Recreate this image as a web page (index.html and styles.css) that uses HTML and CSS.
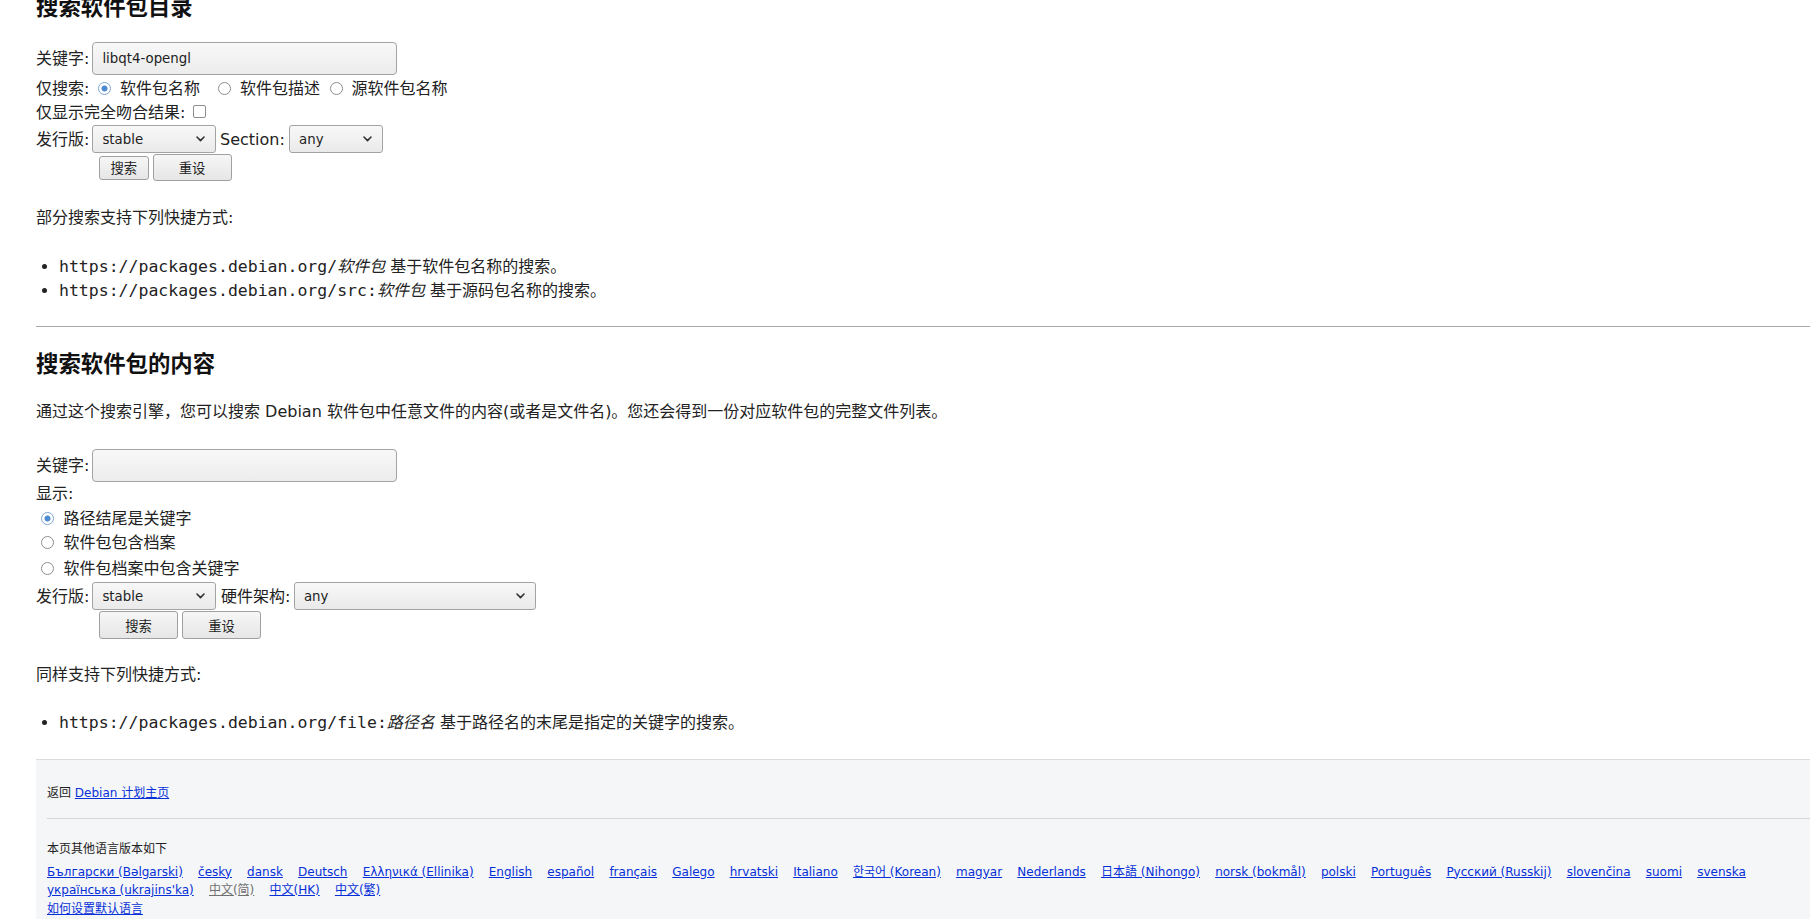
FILE: index.html
```html
<!DOCTYPE html>
<html lang="zh-CN">
<head>
<meta charset="utf-8">
<title>Debian -- 软件包搜索</title>
<link rel="stylesheet" href="styles.css">
</head>
<body>
<div id="content">
  <h2 class="h-first">搜索软件包目录</h2>
  <form class="frm frm-one">
    <div class="row r-input">
      <label for="kw">关键字:</label>
      <input type="text" id="kw" class="text" value="libqt4-opengl">
    </div>
    <div class="row r-line r-first">
      <span>仅搜索:</span>
      <input type="radio" name="searchon" id="onlynames" class="radio m-r1" checked>
      <label for="onlynames" class="m-l1">软件包名称</label>
      <input type="radio" name="searchon" id="descs" class="radio m-r2">
      <label for="descs" class="m-l2">软件包描述</label>
      <input type="radio" name="searchon" id="src" class="radio m-r3">
      <label for="src" class="m-l3">源软件包名称</label>
    </div>
    <div class="row r-check">
      <label for="exact">仅显示完全吻合结果:</label>
      <input type="checkbox" id="exact" class="check">
    </div>
    <div class="row r-select">
      <label for="distro">发行版:</label>
      <span class="sel sel-dist"><select id="distro"><option>stable</option></select><svg class="chev" viewBox="0 0 9 6" width="9" height="6"><polyline points="1,1 4.5,4.6 8,1"/></svg></span>
      <label for="section" class="m-sec">Section:</label>
      <span class="sel sel-sec"><select id="section"><option>any</option></select><svg class="chev" viewBox="0 0 9 6" width="9" height="6"><polyline points="1,1 4.5,4.6 8,1"/></svg></span>
    </div>
    <div class="row r-btn">
      <button type="submit" class="btn btn-small">搜索</button>
      <button type="reset" class="btn btn-wide">重设</button>
    </div>
  </form>

  <p class="p-short p-one">部分搜索支持下列快捷方式:</p>
  <ul class="shortcuts s-one">
    <li><code>https://packages.debian.org/<em>软件包</em></code> 基于软件包名称的搜索。</li>
    <li><code>https://packages.debian.org/src:<em>软件包</em></code> 基于源码包名称的搜索。</li>
  </ul>

  <hr class="sep">

  <h2 class="h-second">搜索软件包的内容</h2>
  <p class="p-intro">通过这个搜索引擎，您可以搜索 Debian 软件包中任意文件的内容(或者是文件名)。您还会得到一份对应软件包的完整文件列表。</p>

  <form class="frm frm-two">
    <div class="row r-input">
      <label for="kw2">关键字:</label>
      <input type="text" id="kw2" class="text" value="">
    </div>
    <div class="row r-show"><span>显示:</span></div>
    <div class="row r-opt r-opt1">
      <input type="radio" name="mode" id="m1" class="radio m-opt" checked>
      <label for="m1" class="m-optl">路径结尾是关键字</label>
    </div>
    <div class="row r-opt r-opt2">
      <input type="radio" name="mode" id="m2" class="radio m-opt">
      <label for="m2" class="m-optl">软件包包含档案</label>
    </div>
    <div class="row r-opt r-opt3">
      <input type="radio" name="mode" id="m3" class="radio m-opt">
      <label for="m3" class="m-optl">软件包档案中包含关键字</label>
    </div>
    <div class="row r-select r-select2">
      <label for="distro2">发行版:</label>
      <span class="sel sel-dist"><select id="distro2"><option>stable</option></select><svg class="chev" viewBox="0 0 9 6" width="9" height="6"><polyline points="1,1 4.5,4.6 8,1"/></svg></span>
      <label for="arch" class="m-arch">硬件架构:</label>
      <span class="sel sel-arch"><select id="arch"><option>any</option></select><svg class="chev" viewBox="0 0 9 6" width="9" height="6"><polyline points="1,1 4.5,4.6 8,1"/></svg></span>
    </div>
    <div class="row r-btn">
      <button type="submit" class="btn btn-wide">搜索</button>
      <button type="reset" class="btn btn-wide">重设</button>
    </div>
  </form>

  <p class="p-short p-two">同样支持下列快捷方式:</p>
  <ul class="shortcuts s-two">
    <li><code>https://packages.debian.org/file:<em>路径名</em></code> 基于路径名的末尾是指定的关键字的搜索。</li>
  </ul>

  <div id="footer">
    <p class="back">返回 <a href="#">Debian 计划主页</a></p>
    <hr class="fhr">
    <p class="other">本页其他语言版本如下</p>
    <div class="langs">
      <a href="#">Български (Bəlgarski)</a>
      <a href="#">česky</a>
      <a href="#">dansk</a>
      <a href="#">Deutsch</a>
      <a href="#">Ελληνικά (Ellinika)</a>
      <a href="#">English</a>
      <a href="#">español</a>
      <a href="#">français</a>
      <a href="#">Galego</a>
      <a href="#">hrvatski</a>
      <a href="#">Italiano</a>
      <a href="#">한국어 (Korean)</a>
      <a href="#">magyar</a>
      <a href="#">Nederlands</a>
      <a href="#">日本語 (Nihongo)</a>
      <a href="#">norsk (bokmål)</a>
      <a href="#">polski</a>
      <a href="#">Português</a>
      <a href="#">Русский (Russkij)</a>
      <a href="#">slovenčina</a>
      <a href="#">suomi</a>
      <a href="#">svenska</a>
      <a href="#">українська (ukrajins'ka)</a>
      <span class="current">中文(简)</span>
      <a href="#">中文(HK)</a>
      <a href="#">中文(繁)</a>
    </div>
    <p class="howto"><a href="#">如何设置默认语言</a></p>
  </div>
</div>
</body>
</html>
```

FILE: styles.css
```css
* { box-sizing: border-box; }

html, body {
  margin: 0;
  padding: 0;
  background: #ffffff;
  overflow: hidden;
}

body {
  font-family: "DejaVu Sans", "Noto Sans CJK SC", sans-serif;
  font-size: 16px;
  color: #222222;
}

#content {
  margin-left: 36px;
}

h2 {
  font-size: 22.4px;
  line-height: 28px;
  font-weight: bold;
  margin: 0;
  color: #111111;
}

.h-first { margin-top: -7px; }
.h-second { margin-top: 23px; }

.frm { margin: 0; }
.frm-one { margin-top: 21px; }
.frm-two { margin-top: 25px; }

.row {
  display: flex;
  align-items: center;
  white-space: nowrap;
  line-height: 23px;
}

.r-input { height: 33px; }
.r-line { height: 24px; }
.r-first { margin-top: 1px; }
.r-check { height: 25px; }
.r-select { height: 28px; }
.r-select2 { height: 30px; }
.r-btn { height: 29px; padding-left: 63px; }
.frm-two .r-btn { height: 28px; }
.r-show { height: 24.5px; }
.r-opt1 { height: 24px; }
.r-opt2 { height: 25px; }
.r-opt3 { height: 26px; }

/* text input */
.text {
  width: 305px;
  height: 33px;
  margin: 0 0 0 3px;
  padding: 0 9px;
  border: 1px solid #a3a3a3;
  border-radius: 4px;
  background: linear-gradient(to bottom, #f8f8f8, #ececec);
  font-family: "DejaVu Sans", "Noto Sans CJK SC", sans-serif;
  font-size: 13.333px;
  color: #222222;
  outline: none;
}

/* radios */
.radio {
  -webkit-appearance: none;
  appearance: none;
  width: 13px;
  height: 13px;
  margin: 0;
  border: 1px solid #8e8e8e;
  border-radius: 50%;
  background: #ffffff;
  flex: none;
}
.radio:checked {
  border-color: #7ea6d4;
  background: radial-gradient(circle at center, #4d8ad0 0, #4d8ad0 2.6px, #ffffff 3.4px);
}
.m-r1 { margin-left: 8.6px; }
.m-l1 { margin-left: 9px; }
.m-r2 { margin-left: 17.7px; }
.m-l2 { margin-left: 9.3px; }
.m-r3 { margin-left: 10px; }
.m-l3 { margin-left: 8.5px; }
.m-opt { margin-left: 5px; }
.m-optl { margin-left: 9.6px; }

/* checkbox */
.check {
  -webkit-appearance: none;
  appearance: none;
  width: 13px;
  height: 13px;
  margin: -2px 0 0 8px;
  border: 1px solid #8e8e8e;
  border-radius: 2px;
  background: #ffffff;
  flex: none;
}

/* selects */
.sel {
  position: relative;
  display: inline-block;
  height: 28px;
  flex: none;
}
.sel select {
  -webkit-appearance: none;
  appearance: none;
  width: 100%;
  height: 28px;
  margin: 0;
  padding: 0 24px 0 9px;
  border: 1px solid #a3a3a3;
  border-radius: 3px;
  background: linear-gradient(to bottom, #f8f8f8, #eaeaea);
  font-family: "DejaVu Sans", "Noto Sans CJK SC", sans-serif;
  font-size: 13.333px;
  color: #222222;
  outline: none;
}
.chev {
  position: absolute;
  right: 11px;
  top: 11px;
  fill: none;
  stroke: #333333;
  stroke-width: 1.6;
  stroke-linecap: round;
  stroke-linejoin: round;
  pointer-events: none;
}
.sel-dist { width: 124px; margin-left: 3px; }
.sel-sec { width: 94px; margin-left: 4.2px; }
.sel-arch { width: 242px; margin-left: 3.6px; }
.m-sec { margin-left: 3.6px; }
.m-arch { margin-left: 4.5px; }

/* buttons */
.btn {
  margin: 0 4px 0 0;
  padding: 0;
  border: 1px solid #a0a0a0;
  border-radius: 3px;
  background: linear-gradient(to bottom, #f6f6f6, #e6e6e6);
  font-family: "DejaVu Sans", "Noto Sans CJK SC", sans-serif;
  font-size: 13.333px;
  color: #222222;
  flex: none;
}
.btn-small { width: 49.5px; height: 24px; }
.btn-wide { width: 79px; height: 27.5px; }

/* paragraphs and shortcut lists */
.p-short, .p-intro {
  margin: 0;
  line-height: 24px;
}
.p-one { margin-top: 24px; }
.p-two { margin-top: 23.5px; }
.p-intro { margin-top: 21.5px; }

.shortcuts {
  margin: 24.5px 0 0 0;
  padding-left: 23px;
  line-height: 24px;
}
.s-one { margin-top: 24.5px; }
.s-two { margin-top: 24.5px; }
.shortcuts li { height: 24px; }
code {
  font-family: "DejaVu Sans Mono", "Noto Sans CJK SC", monospace;
  font-size: 16.5px;
}
code em {
  font-style: italic;
  font-family: "DejaVu Sans", "Noto Sans CJK SC", sans-serif;
  font-size: 16px;
}

.sep {
  margin: 23.5px 0 0 0;
  height: 0;
  border: 0;
  border-top: 1px solid #a9a9a9;
}

/* footer */
#footer {
  margin-top: 23.5px;
  border-top: 1px solid #dcdcdc;
  background: #f5f6f7;
  padding: 24.5px 0 40px 11px;
  font-size: 12px;
  line-height: 18.5px;
  color: #222222;
}
#footer p { margin: 0; }
#footer a { color: #0530d7; text-decoration: underline; }
.fhr {
  margin: 15.5px 0 0 0;
  height: 0;
  border: 0;
  border-top: 1px solid #d6d6d6;
}
.other { margin-top: 20.5px !important; }
.langs {
  margin-top: 4.5px;
  display: flex;
  flex-wrap: wrap;
  column-gap: 15.2px;
  white-space: nowrap;
}
.langs .current { color: #707070; text-decoration: underline; }
.howto { margin: 0; }
```
